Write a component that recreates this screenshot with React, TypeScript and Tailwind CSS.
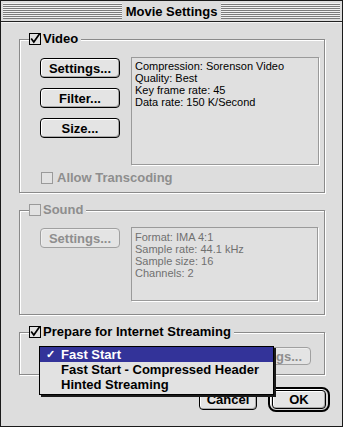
import React from "react";

const font = "font-['Liberation_Sans',Arial,sans-serif]";

const Box = ({ checked, disabled }: { checked?: boolean; disabled?: boolean }) => (
  <svg width="12" height="12" viewBox="0 0 12 12" className="shrink-0 overflow-visible">
    <rect x="0.5" y="0.5" width="11" height="11" fill="#e2e2e2" stroke={disabled ? "#9a9a9a" : "#000"} />
    {checked && <path d="M2.2 5.6 L4.8 9 L10.6 0.8" fill="none" stroke="#000" strokeWidth="1.7" />}
  </svg>
);

const MacButton = ({ label, disabled, className }: { label: string; disabled?: boolean; className?: string }) => (
  <button
    className={
      (disabled
        ? "border-[#a0a0a0] text-[#8e8e8e] shadow-[inset_1px_1px_0_#eeeeee] "
        : "border-black text-black shadow-[inset_1px_1px_0_#ffffff,inset_-1px_-1px_0_#a8a8a8] ") +
      "flex items-center justify-center rounded-[4px] border bg-[#e4e4e4] text-[13px] font-bold leading-none " +
      (className ?? "")
    }
  >
    {label}
  </button>
);

const Group = ({
  label,
  checked,
  disabled,
  children,
}: {
  label: string;
  checked?: boolean;
  disabled?: boolean;
  children: React.ReactNode;
}) => (
  <fieldset className="w-[306px] border border-[#8a8a8a] p-0 shadow-[1px_1px_0_#ffffff,inset_1px_1px_0_#ffffff]">
    <legend className="ml-[9px] flex h-[14px] items-center gap-[2px] bg-[#dddddd] pr-[3px]">
      <Box checked={checked} disabled={disabled} />
      <span className={disabled ? "text-[13px] font-bold text-[#8e8e8e]" : "text-[13px] font-bold text-black"}>{label}</span>
    </legend>
    {children}
  </fieldset>
);

const InfoBox = ({ lines, dim, className }: { lines: string[]; dim?: boolean; className: string }) => (
  <div
    className={
      (dim ? "text-[#707070] " : "text-black ") +
      "border border-[#9a9a9a] bg-[#e0e0e0] pl-[3px] pt-[2px] text-[11px] leading-[12px] shadow-[1px_1px_0_#ffffff] " +
      className
    }
  >
    {lines.map((l) => (
      <div key={l}>{l}</div>
    ))}
  </div>
);

export default function App() {
  return (
    <div className={`${font} relative flex h-[427px] w-[343px] flex-col border border-[#1a1a1a] bg-[#dddddd] text-black`}>
      {/* title bar */}
      <div className="flex h-[21px] items-center gap-[3px] border-b border-[#222] px-[2px] shadow-[0_1px_0_#f4f4f4]">
        <div className="h-[16px] flex-1 bg-[repeating-linear-gradient(to_bottom,#f2f2f2_0px,#f2f2f2_1px,#7c7c7c_1px,#7c7c7c_2px)]" />
        <span className="px-[1px] text-[13px] font-bold leading-none">Movie Settings</span>
        <div className="h-[16px] flex-1 bg-[repeating-linear-gradient(to_bottom,#f2f2f2_0px,#f2f2f2_1px,#7c7c7c_1px,#7c7c7c_2px)]" />
      </div>

      <div className="flex flex-1 flex-col pl-[18px] pt-[10px]">
        {/* Video */}
        <Group label="Video" checked>
          <div className="pl-[20px] pt-[11px] pb-[8px]">
            <div className="flex items-start gap-[11px]">
              <div className="mt-[1px] flex flex-col gap-[10px]">
                <MacButton label="Settings..." className="h-[20px] w-[80px]" />
                <MacButton label="Filter..." className="h-[20px] w-[80px]" />
                <MacButton label="Size..." className="h-[20px] w-[80px]" />
              </div>
              <InfoBox
                className="h-[108px] w-[188px]"
                lines={["Compression: Sorenson Video", "Quality: Best", "Key frame rate: 45", "Data rate: 150 K/Second"]}
              />
            </div>
            <div className="ml-[1px] mt-[7px] flex h-[12px] items-center gap-[4px]">
              <Box disabled />
              <span className="text-[13px] font-bold text-[#8e8e8e]">Allow Transcoding</span>
            </div>
          </div>
        </Group>

        {/* Sound */}
        <div className="mt-[10px]">
          <Group label="Sound" disabled>
            <div className="flex items-start gap-[11px] pl-[20px] pt-[10px] pb-[13px]">
              <MacButton label="Settings..." disabled className="mt-[1px] h-[20px] w-[80px]" />
              <InfoBox
                dim
                className="h-[74px] w-[187px] pt-[3px]"
                lines={["Format: IMA 4:1", "Sample rate: 44.1 kHz", "Sample size: 16", "Channels: 2"]}
              />
            </div>
          </Group>
        </div>

        {/* Streaming */}
        <div className="mt-[10px]">
          <Group label="Prepare for Internet Streaming" checked>
            <div className="flex justify-end pr-[13px] pt-[8px] pb-[9px]">
              <MacButton label="Settings..." disabled className="h-[18px] w-[80px]" />
            </div>
          </Group>
        </div>

        {/* dialog buttons */}
        <div className="mt-[12px] flex items-center justify-end gap-[11px] pr-[12px]">
          <MacButton label="Cancel" className="h-[20px] w-[58px]" />
          <div className="rounded-[8px] border-[2px] border-black bg-[#d6d6d6] px-[2px] py-[1px] shadow-[inset_1px_1px_0_#ffffff]">
            <MacButton label="OK" className="h-[19px] w-[54px]" />
          </div>
        </div>
      </div>

      {/* open popup menu */}
      <div className="absolute left-[38px] top-[345px] w-[235px] border border-black bg-[#e2e2e2] pb-[2px] text-[13px] font-bold shadow-[2px_2px_0_#1a1a1a]">
        <div className="flex h-[15px] items-center bg-[#333399] pl-[6px] text-white">
          <span className="w-[15px] text-[11px]">✓</span>
          <span>Fast Start</span>
        </div>
        <div className="flex h-[15px] items-center pl-[21px]">Fast Start - Compressed Header</div>
        <div className="flex h-[15px] items-center pl-[21px]">Hinted Streaming</div>
      </div>
    </div>
  );
}
